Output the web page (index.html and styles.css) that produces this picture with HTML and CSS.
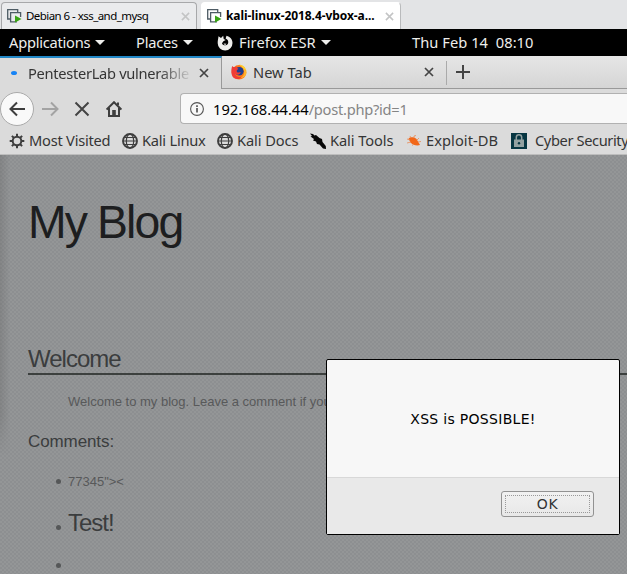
FILE: index.html
```
<!DOCTYPE html>
<html lang="en">
<head>
<meta charset="utf-8">
<title>My Blog</title>
<link rel="stylesheet" href="styles.css">
</head>
<body>
<svg class="defs" width="0" height="0" aria-hidden="true">
  <symbol id="vm" viewBox="0 0 15 15"><path d="M3 10H.7V.7h10V3M10 12.8H3.6V3.6h10V8" fill="none" stroke="#4d5b64" stroke-width="1.3"/><path d="M8 6.5v7l6.5-3.5z" fill="#39a414"/></symbol>
  <symbol id="globe" viewBox="0 0 16 16"><g fill="none" stroke="#3e3e3e"><circle cx="8" cy="8" r="7" stroke-width="1.9"/><ellipse cx="8" cy="8" rx="3.7" ry="7" stroke-width="1.2"/><path d="M1 8h14M2.5 4.5h11M2.5 11.5h11" stroke-width="1.1"/></g></symbol>
  <symbol id="close" viewBox="0 0 10 10"><path d="M1 1l8 8M9 1L1 9" fill="none" stroke="currentColor" stroke-width="1.7"/></symbol>
</svg>
<div class="vm-tabs">
  <div class="vm-tab"><svg class="vm-icon"><use href="#vm"/></svg><span class="vm-name">Debian 6 - xss_and_mysq</span><svg class="vm-close"><use href="#close"/></svg></div>
  <div class="vm-tab vm-active"><svg class="vm-icon"><use href="#vm"/></svg><span class="vm-name">kali-linux-2018.4-vbox-a...</span><svg class="vm-close"><use href="#close"/></svg></div>
</div>
<div class="panel">
  <div class="menu menu-apps"><span>Applications</span><i class="caret"></i></div>
  <div class="menu menu-places"><span>Places</span><i class="caret"></i></div>
  <div class="menu menu-firefox"><svg width="16" height="16" viewBox="0 0 16 16"><path d="M1.5 1.2L4 3 6.2.8l.5 3.3 2 .8-2.3 1.4L5 8.2c.5 2.4 4.4 3 5.8.8 1.2-2 .1-4.7-2.2-5.5L9.5.8c3.6.8 6 3.5 6 7.2a7.4 7.4 0 0 1-14.8.2C.6 5.300 1.300 4 1.500 1.200z" fill="#eeeeec"/><path d="M6.500 8.500l3 .2-1.500 1.500z" fill="#eeeeec"/></svg><span>Firefox ESR</span><i class="caret"></i></div>
  <div class="clock">Thu Feb 14&nbsp; 08:10</div>
</div>
<div class="browser">
  <div class="tabs">
    <div class="tab tab-active"><i class="loading"></i><span class="tab-title">PentesterLab vulnerable b</span><svg class="tab-close"><use href="#close"/></svg></div>
    <div class="tab tab-new"><svg width="16" height="16" viewBox="0 0 16 16"><circle cx="8" cy="8.300" r="7.300" fill="#ff7a16"/><path d="M8 .4c4 .2 7.400 3.300 7.600 7.700-.8-2-2-2.500-3-2.600C12 3.500 10 2.300 8 .400z" fill="#ffd22e"/><path d="M12 4.500c2.500 3.500 1 9-3.500 9.400 2.500.3 6-.8 7-4.700-.2-2-1-4-3.500-4.700z" fill="#ffb52b"/><circle cx="8.300" cy="7.200" r="4.300" fill="#203f8f"/><path d="M1.300 2c.8 1 1.800 1.200 3 1.100l1.400-.8c-.2 1.300.2 2 1.800 2.500L5.800 6.300c-.3 1.500.5 2.200 2 2.100l2-.3c-.8 2.500-3 3.300-5.800 1.900 1 2.500 4 3.800 6.800 2.500-1.800 3.800-8.600 3.500-10-1.700C0 8 .3 4.200 1.300 2z" fill="#ef3c36"/></svg><span class="tab-title">New Tab</span><svg class="tab-close"><use href="#close"/></svg></div>
    <svg class="plus" width="14" height="14" viewBox="0 0 14 14"><path d="M7 0v14M0 7h14" stroke="#444" stroke-width="2"/></svg>
  </div>
  <div class="nav">
    <div class="back"><svg width="17" height="16" viewBox="0 0 17 16"><path d="M16 8H2M8 1.500L1.500 8 8 14.500" fill="none" stroke="#3e3e3e" stroke-width="2"/></svg></div>
    <svg class="forward" width="17" height="16" viewBox="0 0 17 16"><path d="M0 8h15M9 1.500L15.500 8 9 14.500" fill="none" stroke="#a3a3a3" stroke-width="2"/></svg>
    <svg class="stop" width="16" height="16" viewBox="0 0 16 16"><path d="M1.500 1.500l13 13M14.500 1.500l-13 13" stroke="#444" stroke-width="2"/></svg>
    <svg class="home" width="16" height="16" viewBox="0 0 16 16"><path d="M.6 8.500L8 1.200l7.400 7.300M3 7v8h10V7M12 4V1.500" fill="none" stroke="#3e3e3e" stroke-width="2"/><path d="M6.200 14.500V9h3.600v5.500z" fill="#3e3e3e"/></svg>
    <div class="address"><svg width="14" height="14" viewBox="0 0 14 14"><circle cx="7" cy="7" r="6.400" fill="none" stroke="#555" stroke-width="1.100"/><path d="M7 6v4.500M7 3.200v1.700" stroke="#555" stroke-width="1.700"/></svg><span class="url"><span class="host">192.168.44.44</span>/post.php?id=1</span></div>
  </div>
  <div class="bookmarks">
    <div class="mark mark-most"><svg width="16" height="16" viewBox="0 0 16 16"><circle cx="8" cy="8" r="4.300" fill="none" stroke="#3e3e3e" stroke-width="2"/><path d="M8 .7v3M8 12.300v3M.7 8h3M12.300 8h3M2.900 2.900L5 5M11 11l2.100 2.100M13.100 2.900L11 5M5 11l-2.100 2.100" stroke="#3e3e3e" stroke-width="2"/></svg><span>Most Visited</span></div>
    <div class="mark mark-linux"><svg width="16" height="16"><use href="#globe"/></svg><span>Kali Linux</span></div>
    <div class="mark mark-docs"><svg width="16" height="16"><use href="#globe"/></svg><span>Kali Docs</span></div>
    <div class="mark mark-tools"><svg width="16" height="16" viewBox="0 0 16 16"><path d="M0 .5l3 .5 1.500 1.500L6 2l3.500 3L12 6l.5 3 3.300 4 .2 3-3-.5-3.500-4-2.500-.5-1-2.500L3 7.500l1-1.500L.5 3.500 2 3z" fill="#080808"/></svg><span>Kali Tools</span></div>
    <div class="mark mark-exploit"><svg width="16" height="16" viewBox="0 0 16 16"><path d="M2.500 5.500c2-2 6-1.500 8 .5l3.500 6c-3 1-7.500 0-9.500-2.500z" fill="#f26718"/><path d="M5 5L4 3M8 5V3l2-.5M11 7l2-2M4 7L1 6M5 9L1 10M8 11l-2 1.500M12 9l3-.5" fill="none" stroke="#e98a56" stroke-width=".8"/></svg><span>Exploit-DB</span></div>
    <div class="mark mark-cyber"><svg width="16" height="16" viewBox="0 0 16 16"><path d="M0 0h16v16H0z" fill="#073642"/><path d="M5.300 7V4.500a2.700 2.700 0 0 1 5.400 0V7" fill="none" stroke="#93a1a1" stroke-width="1.500"/><path d="M3 6.500h10V14H3z" fill="#93a1a1"/><circle cx="8" cy="10.300" r="1.200" fill="#073642"/></svg><span>Cyber Security</span></div>
  </div>
  <main class="page">
    <h1>My Blog</h1>
    <h2 class="section">Welcome</h2>
    <p class="intro">Welcome to my blog. Leave a comment if you</p>
    <h3>Comments:</h3>
    <ul>
      <li>77345"&gt;&lt;</li>
      <li class="loud"><h2>Test!</h2></li>
      <li></li>
    </ul>
    <div class="shade"></div>
  </main>
</div>
<div class="dialog" role="alertdialog">
  <div class="message">XSS is POSSIBLE!</div>
  <div class="actions"><button class="ok"><span>OK</span></button></div>
</div>
</body>
</html>
```
FILE: styles.css
```
* { box-sizing: border-box; }
body { margin: 0; width: 627px; height: 574px; overflow: hidden; background: #919394; font: 14.67px/20px "Noto Sans", sans-serif; letter-spacing: -.24px; color: #353535; }
svg { flex: none; display: block; }
.defs { position: absolute; }
span { white-space: nowrap; }

.vm-tabs { height: 29px; background: #e3e4e6; display: flex; align-items: flex-end; gap: 4px; padding-left: 1px; }
.vm-tab { width: 196px; height: 27px; border: 1px solid #a7a8aa; border-bottom: 0; border-radius: 4px 4px 0 0; background: #eaebed; display: flex; align-items: center; padding: 0 6px 0 5px; font: 11.5px/16px "Noto Sans", sans-serif; color: #000; }
.vm-active { width: 200px; background: #fff; border-color: #fff #b9babc #fff #fff; font-size: 12px; font-weight: 700; }
.vm-icon { width: 15px; height: 15px; }
.vm-name { margin-left: 4px; letter-spacing: -.55px; }
.vm-active .vm-name { letter-spacing: -.07px; }
.vm-close { width: 9px; height: 9px; margin-left: auto; color: #c3c4c5; }

.panel { height: 27px; background: #000; color: #eeeeec; display: flex; align-items: center; }
.menu { display: flex; align-items: center; height: 27px; }
.menu span, .clock { position: relative; top: -1px; }
.caret { border: 5px solid transparent; border-top: 5px solid #eeeeec; border-bottom: 0; margin-left: 5px; }
.menu-apps { width: 127px; padding-left: 9px; }
.menu-places { width: 81px; padding-left: 9px; }
.menu-firefox { width: 204px; padding-left: 9px; }
.menu-firefox span { margin-left: 6px; letter-spacing: .08px; }
.clock { letter-spacing: .05px; }

.browser { background: #dbdbdb; height: 518px; }
.tabs { height: 33px; display: flex; align-items: stretch; background: linear-gradient(#e6e6e6, #d5d5d5); border-bottom: 1px solid #999; }
.tab { display: flex; align-items: center; }
.tab-active { width: 222px; height: 33px; background: #dbdbdb; border-top: 2px solid #2187c6; border-right: 1px solid #999; padding-left: 11px; padding-bottom: 2px; }
.loading { width: 6px; height: 4px; border-radius: 50%; background: #1683f5; }
.tab-active .tab-title { width: 163px; margin-left: 11px; overflow: hidden; letter-spacing: -.3px; -webkit-mask-image: linear-gradient(to right, #000 130px, transparent 165px); mask-image: linear-gradient(to right, #000 130px, transparent 165px); }
.tab-close { width: 10px; height: 10px; color: #444; }
.tab-active .tab-close { margin-left: 8px; }
.tab-new { width: 225px; padding-left: 9px; position: relative; }
.tab-new::after { content: ""; position: absolute; right: 0; top: 5px; width: 1px; height: 24px; background: #aaa; }
.tab-new .tab-title { margin-left: 6px; letter-spacing: 0; }
.tab-new .tab-close { margin-left: auto; margin-right: 13px; }
.plus { margin: 9px 0 0 9px; }
.nav { height: 39px; display: flex; align-items: center; }
.back { width: 34px; height: 34px; border: 1px solid #aaa; border-radius: 50%; background: #f9f9f9; display: flex; align-items: center; justify-content: center; }
.forward { margin-left: 8px; }
.stop { margin-left: 15px; }
.home { margin-left: 16px; }
.address { margin-left: 58px; flex: 1; height: 31px; border: 1px solid #b1b1b1; border-right: 0; border-radius: 4px 0 0 4px; background: #f8f8f8; padding-left: 9px; display: flex; align-items: center; }
.url { margin-left: 9px; color: #858585; letter-spacing: -.26px; }
.host { color: #000; letter-spacing: 0; }
.bookmarks { height: 27px; display: flex; align-items: center; padding-left: 9px; border-bottom: 1px solid #bdbdbd; overflow: hidden; }
.mark { display: flex; align-items: center; flex: none; height: 25px; }
.mark span { margin-left: 4px; position: relative; top: -1px; }
.mark-most { width: 113px; }
.mark-linux { width: 95px; }
.mark-docs { width: 93px; }
.mark-docs span, .mark-tools span { letter-spacing: -.1px; }
.mark-tools { width: 96px; }
.mark-exploit { width: 105px; }
.mark-exploit span { letter-spacing: .05px; }
.mark-cyber span { margin-left: 8px; letter-spacing: -.4px; }

.page { position: relative; height: 419px; padding-left: 28px; overflow: hidden; color: #58595a; background-color: #949697; background-image: radial-gradient(circle at 1px 1px, #8d8f91 1px, transparent 1.2px), radial-gradient(circle at 3px 3px, #8d8f91 1px, transparent 1.2px); background-size: 4px 4px; font: 13px/18px "Liberation Sans", sans-serif; letter-spacing: 0; }
.shade { position: absolute; left: 0; top: 0; width: 10px; height: 300px; background: linear-gradient(to right, rgba(80, 80, 80, .22), transparent); -webkit-mask-image: linear-gradient(#000 260px, transparent); mask-image: linear-gradient(#000 260px, transparent); }
h1, h2, h3, p, ul { margin: 0; font-weight: 400; }
h1 { padding-top: 38px; font-size: 46.4px; line-height: 58px; letter-spacing: -1.9px; color: #1d1e20; }
h2 { font-size: 24px; line-height: 28px; letter-spacing: -1px; color: #3b3d3e; }
.section { margin-top: 94px; height: 30px; border-bottom: 2px solid #3c403e; }
.intro { margin: 18px 0 0 40px; white-space: nowrap; }
h3 { margin-top: 19px; font-size: 17px; line-height: 24px; letter-spacing: -.1px; color: #3b3d3e; }
ul { margin-top: 19px; padding-left: 40px; list-style: none; }
li { height: 18px; position: relative; }
li::before { content: ""; position: absolute; left: -12px; top: 6px; width: 5px; height: 5px; border-radius: 50%; background: #555758; }
.loud { height: 28px; margin: 18px 0 20px; }
.loud::before { top: 16px; }

.dialog { position: absolute; left: 326px; top: 359px; width: 294px; height: 176px; border: 1px solid #000; border-radius: 2px; background: #f7f7f7; font: 14px/18px "DejaVu Sans", sans-serif; letter-spacing: .3px; color: #000; }
.message { height: 117px; display: flex; align-items: center; justify-content: center; }
.actions { height: 57px; background: #e9e9e9; border-top: 1px solid #d8d8d8; display: flex; justify-content: flex-end; padding: 13px 25px 0 0; }
.ok { width: 93px; height: 26px; padding: 3px; border: 1px solid #929292; border-radius: 3px; background: linear-gradient(#f1f1f1, #e8e8e8); font: inherit; letter-spacing: .6px; color: #333; }
.ok span { display: block; height: 18px; line-height: 17px; border: 1px dotted #999; }
```
